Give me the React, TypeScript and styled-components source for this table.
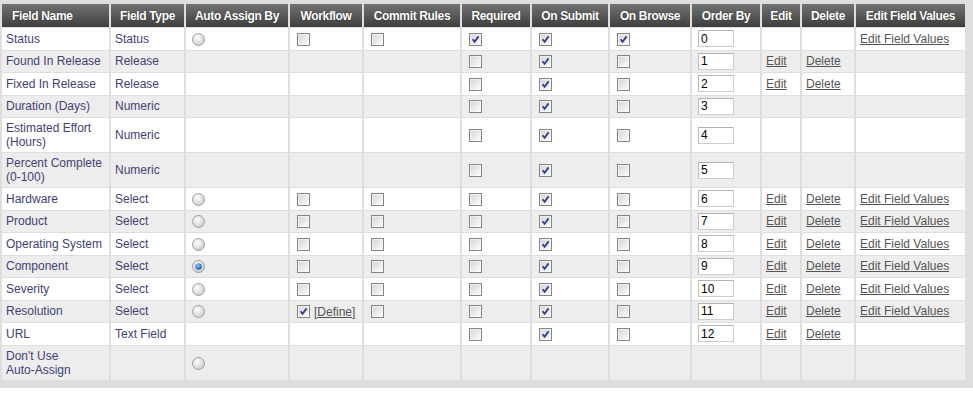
import React from "react";
import styled, { createGlobalStyle } from "styled-components";

const GlobalStyle = createGlobalStyle`
  body {
    margin: 0;
    background: #ffffff;
    font-family: "Liberation Sans", Arial, sans-serif;
  }
`;

const Wrapper = styled.div`
  background: #dedede;
  padding: 3px 0 7px 0;
  width: 973px;
`;

const Table = styled.table`
  table-layout: fixed;
  width: 967px;
  border-collapse: separate;
  border-spacing: 2px 1px;
  font-size: 12px;
`;

const Col = styled.col<{ $w: number }>`
  width: ${(p) => p.$w}px;
`;

const HeadCell = styled.th<{ $left?: boolean }>`
  height: 23px;
  padding: 0 ${(p) => (p.$left ? "4px 0 10px" : "2px")};
  background: linear-gradient(#727272, #3e3e3e);
  color: #ffffff;
  font-weight: bold;
  font-size: 12px;
  letter-spacing: -0.35px;
  white-space: nowrap;
  text-align: ${(p) => (p.$left ? "left" : "center")};
  text-shadow: 0 0 1px rgba(0, 0, 0, 0.6);
`;

const Row = styled.tr<{ $alt: boolean; $tall?: boolean }>`
  height: ${(p) => (p.$tall ? "34px" : "21.5px")};
  background: ${(p) => (p.$alt ? "#ededed" : "#ffffff")};
`;

const Cell = styled.td`
  padding: 0 4px;
  line-height: 14px;
  color: #433f76;
  vertical-align: middle;
  white-space: nowrap;
`;

const NameCell = styled(Cell)`
  white-space: normal;
`;

const NoWrap = styled.span`
  white-space: nowrap;
`;

const LinkText = styled.a`
  color: #555555;
  text-decoration: underline;
  cursor: pointer;
`;

const DefineLink = styled(LinkText)`
  margin-left: 4px;
  vertical-align: middle;
`;

const BoxWrap = styled.span<{ $ml: number }>`
  display: inline-block;
  width: 13px;
  height: 13px;
  margin-left: ${(p) => p.$ml}px;
  vertical-align: middle;
  line-height: 0;
`;

const OrderInput = styled.input`
  box-sizing: border-box;
  width: 36px;
  height: 17px;
  margin: 0 0 0 2px;
  padding: 0 2px;
  border: 1px solid #cdcdcd;
  border-top-color: #b4b4b4;
  border-left-color: #bdbdbd;
  font-family: "Liberation Sans", Arial, sans-serif;
  font-size: 12px;
  color: #000000;
  vertical-align: middle;
  outline: none;
`;

function Check({ on }: { on: boolean }) {
  return (
    <BoxWrap $ml={3}>
      <svg width="13" height="13" viewBox="0 0 13 13">
        <defs>
          <linearGradient id="cbg" x1="0" y1="0" x2="1" y2="1">
            <stop offset="0" stopColor="#d6d6d6" />
            <stop offset="1" stopColor="#fbfbfb" />
          </linearGradient>
        </defs>
        <rect x="0.5" y="0.5" width="12" height="12" fill="#ffffff" stroke="#858585" />
        <rect x="1.5" y="1.5" width="10" height="10" fill="url(#cbg)" />
        {on && (
          <path
            d="M3.6 6.3 L5.6 8.8 L9.6 3.4"
            fill="none"
            stroke="#2f3d96"
            strokeWidth="1.8"
          />
        )}
      </svg>
    </BoxWrap>
  );
}

function Radio({ on }: { on: boolean }) {
  return (
    <BoxWrap $ml={2}>
      <svg width="13" height="13" viewBox="0 0 13 13">
        <defs>
          <radialGradient id="rbg" cx="0.4" cy="0.35" r="0.7">
            <stop offset="0" stopColor="#ffffff" />
            <stop offset="1" stopColor="#c9c9c9" />
          </radialGradient>
          <radialGradient id="rdot" cx="0.4" cy="0.35" r="0.7">
            <stop offset="0" stopColor="#8fcfff" />
            <stop offset="1" stopColor="#0f4ea8" />
          </radialGradient>
        </defs>
        <circle cx="6.5" cy="6.5" r="6" fill="url(#rbg)" stroke="#a0a0a0" />
        {on && <circle cx="6.5" cy="6.5" r="3.3" fill="url(#rdot)" />}
      </svg>
    </BoxWrap>
  );
}

type FieldRow = {
  name: React.ReactNode;
  key: string;
  type: string;
  radio?: boolean;
  wf?: boolean;
  define?: boolean;
  commit?: boolean;
  req?: boolean;
  submit?: boolean;
  browse?: boolean;
  order?: number;
  edit?: boolean;
  values?: boolean;
  tall?: boolean;
};

const selectRow = (name: string, order: number, extra: Partial<FieldRow> = {}): FieldRow => ({
  name,
  key: name,
  type: "Select",
  radio: false,
  wf: false,
  commit: false,
  req: false,
  submit: true,
  browse: false,
  order,
  edit: true,
  values: true,
  ...extra,
});

const plainRow = (name: string, type: string, order: number, edit: boolean, tall = false): FieldRow => ({
  name,
  key: name,
  type,
  req: false,
  submit: true,
  browse: false,
  order,
  edit,
  tall,
});

const rows: FieldRow[] = [
  {
    name: "Status",
    key: "Status",
    type: "Status",
    radio: false,
    wf: false,
    commit: false,
    req: true,
    submit: true,
    browse: true,
    order: 0,
    values: true,
  },
  plainRow("Found In Release", "Release", 1, true),
  plainRow("Fixed In Release", "Release", 2, true),
  plainRow("Duration (Days)", "Numeric", 3, false),
  plainRow("Estimated Effort (Hours)", "Numeric", 4, false, true),
  plainRow("Percent Complete (0-100)", "Numeric", 5, false, true),
  selectRow("Hardware", 6),
  selectRow("Product", 7),
  selectRow("Operating System", 8),
  selectRow("Component", 9, { radio: true }),
  selectRow("Severity", 10),
  selectRow("Resolution", 11, { wf: true, define: true }),
  plainRow("URL", "Text Field", 12, true),
  {
    name: (
      <>
        Don't Use <NoWrap>Auto-Assign</NoWrap>
      </>
    ),
    key: "none",
    type: "",
    radio: false,
    tall: true,
  },
];

const widths = [107, 73, 102, 72, 96, 68, 76, 80, 68, 38, 52, 109];
const headers = [
  "Field Name",
  "Field Type",
  "Auto Assign By",
  "Workflow",
  "Commit Rules",
  "Required",
  "On Submit",
  "On Browse",
  "Order By",
  "Edit",
  "Delete",
  "Edit Field Values",
];

const box = (v?: boolean) => (v === undefined ? null : <Check on={v} />);

export default function App() {
  return (
    <Wrapper>
      <GlobalStyle />
      <Table>
        <colgroup>
          {widths.map((w, i) => (
            <Col key={i} $w={w} />
          ))}
        </colgroup>
        <thead>
          <tr>
            {headers.map((h, i) => (
              <HeadCell key={h} $left={i === 0}>
                {h}
              </HeadCell>
            ))}
          </tr>
        </thead>
        <tbody>
          {rows.map((r, i) => (
            <Row key={r.key} $alt={i % 2 === 1} $tall={r.tall}>
              <NameCell>{r.name}</NameCell>
              <Cell>{r.type}</Cell>
              <Cell>{r.radio !== undefined && <Radio on={r.radio} />}</Cell>
              <Cell>
                {box(r.wf)}
                {r.define && <DefineLink>[Define]</DefineLink>}
              </Cell>
              <Cell>{box(r.commit)}</Cell>
              <Cell>{box(r.req)}</Cell>
              <Cell>{box(r.submit)}</Cell>
              <Cell>{box(r.browse)}</Cell>
              <Cell>
                {r.order !== undefined && (
                  <OrderInput defaultValue={String(r.order)} />
                )}
              </Cell>
              <Cell>{r.edit && <LinkText>Edit</LinkText>}</Cell>
              <Cell>{r.edit && <LinkText>Delete</LinkText>}</Cell>
              <Cell>{r.values && <LinkText>Edit Field Values</LinkText>}</Cell>
            </Row>
          ))}
        </tbody>
      </Table>
    </Wrapper>
  );
}
